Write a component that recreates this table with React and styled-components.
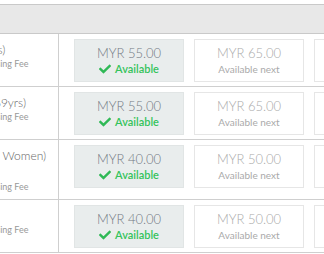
import styled, { createGlobalStyle } from "styled-components";
import { FaCheck } from "react-icons/fa";

const GlobalStyle = createGlobalStyle`
  html, body {
    margin: 0;
    padding: 0;
    background: #fff;
  }
  body {
    font-family: Lato, "Open Sans", Arial, sans-serif;
  }
`;

const NOTE = "Price is inclusive of SST and Processing Fee";

const rows = [
  {
    title: ["Malaysian Adults (13-59 yrs)"],
    prices: ["55.00", "65.00", "75.00"],
  },
  {
    title: ["Senior Malaysian (Age 60-69yrs)"],
    prices: ["55.00", "65.00", "75.00"],
  },
  {
    title: ["Disabled Malaysian (Men & Women)", "MyKad"],
    prices: ["40.00", "50.00", "60.00"],
  },
  {
    title: ["Child"],
    prices: ["40.00", "50.00", "60.00"],
  },
];

const App = () => {
  return (
    <>
      <GlobalStyle />
      <Viewport>
        <Table>
          <HeaderBar />
          {rows.map((row, i) => (
            <Row key={i}>
              <LabelCell>
                {row.title.map((line, j) => (
                  <Title key={j}>{line}</Title>
                ))}
                <Note>{NOTE}</Note>
              </LabelCell>
              <PriceCell>
                {row.prices.map((price, k) => (
                  <PriceBox key={k} $current={k === 0}>
                    <Amount $current={k === 0}>MYR {price}</Amount>
                    {k === 0 ? (
                      <Status>
                        <FaCheck size={12} />
                        Available
                      </Status>
                    ) : (
                      <Next>Available next</Next>
                    )}
                  </PriceBox>
                ))}
              </PriceCell>
            </Row>
          ))}
        </Table>
      </Viewport>
    </>
  );
};

export default App;

const Viewport = styled.div`
  width: 324px;
  height: 254px;
  overflow: hidden;
  padding-top: 4px;
  box-sizing: border-box;
`;

const Table = styled.div`
  margin-left: -141px;
  width: 700px;
`;

const HeaderBar = styled.div`
  height: 28px;
  background: #e8e8e8;
  border-top: 1px solid #c9c9c9;
  border-bottom: 1px solid #c9c9c9;
`;

const Row = styled.div`
  display: flex;
  border-bottom: 1px solid #cfcfcf;
`;

const LabelCell = styled.div`
  flex: none;
  width: 199px;
  box-sizing: content-box;
  overflow: hidden;
  border-right: 1px solid #cfcfcf;
  padding: 7px 0 7px 10px;
  margin-left: -10px;
  color: #666;
`;

const Title = styled.div`
  font-size: 12px;
  font-weight: 300;
  line-height: 17px;
  white-space: nowrap;
`;

const Note = styled.div`
  font-size: 9px;
  line-height: 11px;
  color: #999;
  white-space: nowrap;
`;

const PriceCell = styled.div`
  display: flex;
  gap: 10px;
  align-items: flex-start;
  padding: 5px 0 4px 15px;
`;

const PriceBox = styled.div`
  flex: none;
  width: 110px;
  height: 43px;
  box-sizing: border-box;
  padding-top: 4px;
  text-align: center;
  background: ${(p) => (p.$current ? "#e9eded" : "#fff")};
  border: 1px solid ${(p) => (p.$current ? "#e1e5e5" : "#e6e6e6")};
`;

const Amount = styled.div`
  font-size: 13px;
  font-weight: 300;
  line-height: 18px;
  color: ${(p) => (p.$current ? "#737a84" : "#aaa")};
`;

const Status = styled.div`
  display: flex;
  align-items: center;
  justify-content: center;
  gap: 4px;
  font-size: 11px;
  font-weight: 600;
  line-height: 14px;
  color: #34c35b;
  svg {
    color: #2fb956;
  }
`;

const Next = styled.div`
  font-size: 10px;
  line-height: 14px;
  color: #aaa;
`;
